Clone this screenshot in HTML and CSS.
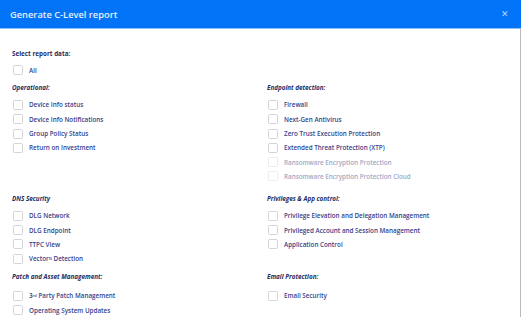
FILE: index.html
```html
<!DOCTYPE html>
<html lang="en">
<head>
    <meta charset="UTF-8">
    <title>Generate C-Level report</title>
    <link rel="stylesheet" href="styles.css">
</head>
<body>
    <div class="modal">
        <div class="modal-header">
            <h1>Generate C-Level report</h1>
            <span class="close">&#x2715;</span>
        </div>
        <div class="modal-body">
            <p class="intro">Select report data:</p>
            <label class="check"><span class="box"></span>All</label>

            <div class="sections">
                <!-- row 1 -->
                <div class="section">
                    <h2>Operational:</h2>
                    <label class="check"><span class="box"></span>Device Info status</label>
                    <label class="check"><span class="box"></span>Device Info Notifications</label>
                    <label class="check"><span class="box"></span>Group Policy Status</label>
                    <label class="check"><span class="box"></span>Return on Investment</label>
                </div>
                <div class="section">
                    <h2>Endpoint detection:</h2>
                    <label class="check"><span class="box"></span>Firewall</label>
                    <label class="check"><span class="box"></span>Next-Gen Antivirus</label>
                    <label class="check"><span class="box"></span>Zero Trust Execution Protection</label>
                    <label class="check"><span class="box"></span>Extended Threat Protection (XTP)</label>
                    <label class="check disabled"><span class="box"></span>Ransomware Encryption Protection</label>
                    <label class="check disabled"><span class="box"></span>Ransomware Encryption Protection Cloud</label>
                </div>

                <!-- row 2 -->
                <div class="section">
                    <h2>DNS Security</h2>
                    <label class="check"><span class="box"></span>DLG Network</label>
                    <label class="check"><span class="box"></span>DLG Endpoint</label>
                    <label class="check"><span class="box"></span>TTPC View</label>
                    <label class="check"><span class="box"></span>Vector<sup>N</sup>&nbsp;Detection</label>
                </div>
                <div class="section">
                    <h2>Privileges &amp; App control:</h2>
                    <label class="check"><span class="box"></span>Privilege Elevation and Delegation Management</label>
                    <label class="check"><span class="box"></span>Privileged Account and Session Management</label>
                    <label class="check"><span class="box"></span>Application Control</label>
                </div>

                <!-- row 3 -->
                <div class="section last">
                    <h2>Patch and Asset Management:</h2>
                    <label class="check"><span class="box"></span>3<sup>rd</sup>&nbsp;Party Patch Management</label>
                    <label class="check"><span class="box"></span>Operating System Updates</label>
                </div>
                <div class="section last">
                    <h2>Email Protection:</h2>
                    <label class="check"><span class="box"></span>Email Security</label>
                </div>
            </div>
        </div>
    </div>
</body>
</html>
```

FILE: styles.css
```css
body {
    margin: 0;
    font-family: "Open Sans", sans-serif;
    background: #fff;
}
.modal {
    width: 521px;
    height: 317px;
    overflow: hidden;
}
.modal-header {
    height: 28px;
    background-color: #0073f7;
    border-bottom: 1px solid #8fc0fb;
    display: flex;
    align-items: center;
    justify-content: space-between;
    padding: 0 10px;
}
.modal-header h1 {
    margin: 0;
    font-size: 9.3px;
    font-weight: 600;
    color: #e6efff;
}
.close {
    color: #b9d6ff;
    font-size: 9px;
    margin-right: 2px;
    margin-top: -2px;
}
.modal-body {
    height: 288px;
    border-right: 1px solid #bbbbbb;
    padding: 20px 0 0 12px;
    box-sizing: border-box;
}
.intro {
    margin: 0 0 5px;
    font-size: 6.3px;
    font-weight: 700;
    color: #1f2d63;
    line-height: 9px;
}
.sections {
    display: grid;
    grid-template-columns: 255px 1fr;
    row-gap: 9px;
    margin-top: 4.5px;
}
.section h2 {
    margin: 0 0 4px;
    font-size: 6.3px;
    font-weight: 700;
    font-style: italic;
    color: #1f2d63;
    line-height: 12px;
}
.section.last {
    margin-top: -4px;
}
.section.last h2 {
    margin-bottom: 6px;
}
.check {
    display: flex;
    align-items: center;
    height: 14.3px;
    font-size: 6.3px;
    font-weight: 600;
    color: #36428a;
}
.check .box {
    width: 8px;
    height: 8px;
    border: 1px solid #d3d3d8;
    border-radius: 1.5px;
    margin: 0 6px 0 1px;
    background: #fff;
}
.check.disabled {
    color: #a3a8c4;
}
.check.disabled .box {
    border-color: #ececef;
}
.check sup {
    font-size: 4px;
    line-height: 0;
}
```
